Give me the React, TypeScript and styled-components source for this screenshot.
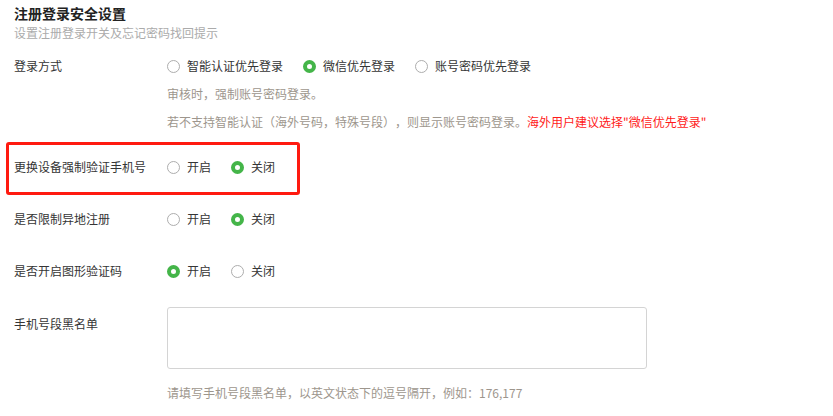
import React, { useState } from 'react';
import styled, { createGlobalStyle, css } from 'styled-components';

const GlobalStyle = createGlobalStyle`
  html, body {
    margin: 0;
    padding: 0;
    background: #fff;
  }
  body {
    font-family: "Noto Sans CJK SC", "Noto Sans", sans-serif;
    color: #353535;
    text-spacing-trim: space-all;
  }
`;

const Page = styled.div`
  padding: 3px 14px 0;
  width: 833px;
  box-sizing: border-box;
`;

const Title = styled.h3`
  margin: 0;
  font-size: 14px;
  line-height: 20px;
  font-weight: bold;
  color: #222;
`;

const SubTitle = styled.p`
  margin: 0;
  font-size: 12px;
  line-height: 20px;
  color: #ababab;
`;

const FormItem = styled.div<{ top: number; highlight?: boolean }>`
  display: flex;
  margin-top: ${p => p.top}px;
  position: relative;

  ${p =>
    p.highlight &&
    css`
      &::after {
        content: '';
        position: absolute;
        left: -8px;
        top: -15px;
        width: 294px;
        height: 53px;
        box-sizing: border-box;
        border: 3px solid #ff1a10;
        border-radius: 3px;
        pointer-events: none;
      }
    `}
`;

const Label = styled.label<{ pad?: number }>`
  width: 153px;
  flex-shrink: 0;
  font-size: 12px;
  line-height: 20px;
  padding-top: ${p => p.pad || 0}px;
  color: #353535;
`;

const Controls = styled.div`
  flex: 1;
`;

const RadioGroup = styled.div`
  display: flex;
  align-items: center;
  gap: 20px;
  height: 20px;
`;

const RadioOption = styled.span`
  display: inline-flex;
  align-items: center;
  gap: 7px;
  font-size: 12px;
  line-height: 20px;
  cursor: pointer;
  color: #353535;
`;

const Dot = styled.i<{ checked: boolean }>`
  display: inline-block;
  width: 13px;
  height: 13px;
  box-sizing: border-box;
  border-radius: 50%;
  background: #fff;
  border: ${p => (p.checked ? '4px solid #44b549' : '1px solid #adadad')};
`;

const Tip = styled.p<{ top: number }>`
  margin: ${p => p.top}px 0 0;
  font-size: 12px;
  line-height: 20px;
  color: #9d968d;
`;

const Warn = styled.span`
  color: #ff1a1a;
`;

const TextArea = styled.textarea`
  display: block;
  width: 480px;
  height: 62px;
  box-sizing: border-box;
  border: 1px solid #d4d4d4;
  border-radius: 3px;
  resize: none;
  outline: none;
  padding: 6px 8px;
  font-family: inherit;
  font-size: 12px;
`;

type RadioProps = {
  options: string[];
  value: number;
  onChange: (i: number) => void;
};

const Radios: React.FC<RadioProps> = ({ options, value, onChange }) => (
  <RadioGroup>
    {options.map((o, i) => (
      <RadioOption key={o} onClick={() => onChange(i)}>
        <Dot checked={value === i} />
        {o}
      </RadioOption>
    ))}
  </RadioGroup>
);

const App: React.FC = () => {
  const [login, setLogin] = useState(1);
  const [device, setDevice] = useState(1);
  const [region, setRegion] = useState(1);
  const [captcha, setCaptcha] = useState(0);

  return (
    <Page>
      <GlobalStyle />
      <Title>注册登录安全设置</Title>
      <SubTitle>设置注册登录开关及忘记密码找回提示</SubTitle>

      <FormItem top={13}>
        <Label>登录方式</Label>
        <Controls>
          <Radios
            options={['智能认证优先登录', '微信优先登录', '账号密码优先登录']}
            value={login}
            onChange={setLogin}
          />
          <Tip top={8}>审核时，强制账号密码登录。</Tip>
          <Tip top={8}>
            若不支持智能认证（海外号码，特殊号段），则显示账号密码登录。
            <Warn>海外用户建议选择"微信优先登录"</Warn>
          </Tip>
        </Controls>
      </FormItem>

      <FormItem top={25} highlight>
        <Label>更换设备强制验证手机号</Label>
        <Controls>
          <Radios options={['开启', '关闭']} value={device} onChange={setDevice} />
        </Controls>
      </FormItem>

      <FormItem top={32}>
        <Label>是否限制异地注册</Label>
        <Controls>
          <Radios options={['开启', '关闭']} value={region} onChange={setRegion} />
        </Controls>
      </FormItem>

      <FormItem top={32}>
        <Label>是否开启图形验证码</Label>
        <Controls>
          <Radios options={['开启', '关闭']} value={captcha} onChange={setCaptcha} />
        </Controls>
      </FormItem>

      <FormItem top={26}>
        <Label pad={7}>手机号段黑名单</Label>
        <Controls>
          <TextArea />
          <Tip top={14}>请填写手机号段黑名单，以英文状态下的逗号隔开，例如：176,177</Tip>
        </Controls>
      </FormItem>
    </Page>
  );
};

export default App;
